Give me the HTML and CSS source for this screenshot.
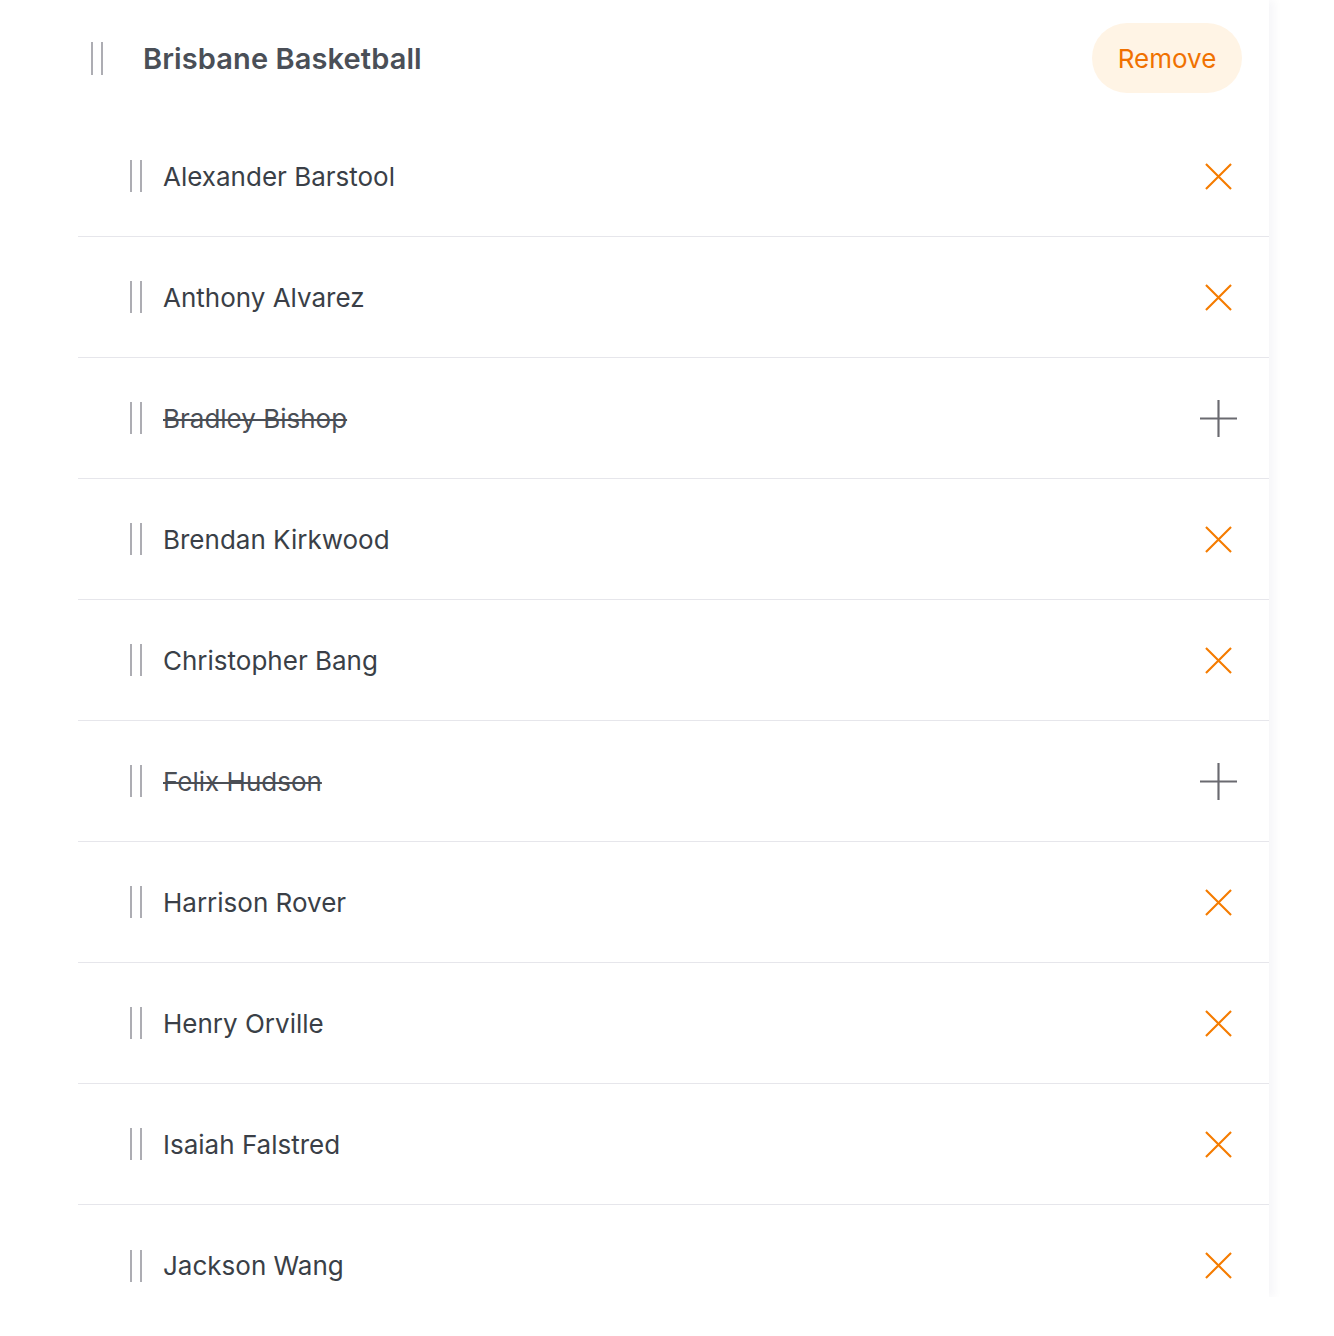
FILE: index.html
```html
<!DOCTYPE html>
<html>
<head>
<meta charset="utf-8">
<link rel="stylesheet" href="styles.css">
</head>
<body>
<div class="card">
  <div class="header">
    <span class="handle handle-lg"></span>
    <h1 class="title">Brisbane Basketball</h1>
    <button class="remove">Remove</button>
  </div>
  <ul class="list">
    <li class="row"><span class="handle"></span><span class="name">Alexander Barstool</span><span class="icon x"><svg viewBox="0 0 28 28"><path d="M1 1L27 27M27 1L1 27"/></svg></span></li>
    <li class="row"><span class="handle"></span><span class="name">Anthony Alvarez</span><span class="icon x"><svg viewBox="0 0 28 28"><path d="M1 1L27 27M27 1L1 27"/></svg></span></li>
    <li class="row"><span class="handle"></span><span class="name struck">Bradley Bishop</span><span class="icon plus"><svg viewBox="0 0 38 38"><path d="M19 0V38M0 19H38"/></svg></span></li>
    <li class="row"><span class="handle"></span><span class="name">Brendan Kirkwood</span><span class="icon x"><svg viewBox="0 0 28 28"><path d="M1 1L27 27M27 1L1 27"/></svg></span></li>
    <li class="row"><span class="handle"></span><span class="name">Christopher Bang</span><span class="icon x"><svg viewBox="0 0 28 28"><path d="M1 1L27 27M27 1L1 27"/></svg></span></li>
    <li class="row"><span class="handle"></span><span class="name struck">Felix Hudson</span><span class="icon plus"><svg viewBox="0 0 38 38"><path d="M19 0V38M0 19H38"/></svg></span></li>
    <li class="row"><span class="handle"></span><span class="name">Harrison Rover</span><span class="icon x"><svg viewBox="0 0 28 28"><path d="M1 1L27 27M27 1L1 27"/></svg></span></li>
    <li class="row"><span class="handle"></span><span class="name">Henry Orville</span><span class="icon x"><svg viewBox="0 0 28 28"><path d="M1 1L27 27M27 1L1 27"/></svg></span></li>
    <li class="row"><span class="handle"></span><span class="name">Isaiah Falstred</span><span class="icon x"><svg viewBox="0 0 28 28"><path d="M1 1L27 27M27 1L1 27"/></svg></span></li>
    <li class="row last"><span class="handle"></span><span class="name">Jackson Wang</span><span class="icon x"><svg viewBox="0 0 28 28"><path d="M1 1L27 27M27 1L1 27"/></svg></span></li>
  </ul>
</div>
</body>
</html>
```
FILE: styles.css
```css
* { box-sizing: border-box; }
html, body { margin: 0; padding: 0; background: #ffffff; }
body { font-family: Inter, "Noto Sans", sans-serif; color: #3b4048; }

.card {
  margin-left: 78px;
  width: 1191px;
  height: 1297px;
  overflow: hidden;
  background: #fff;
  box-shadow: 6px 0 8px rgba(40, 30, 80, 0.035);
}

.header {
  height: 116px;
  display: flex;
  align-items: center;
  padding-left: 13px;
  padding-right: 27px;
}
.title {
  margin: 0 0 0 40px;
  font-size: 29px;
  font-weight: 600;
  color: #4a4f57;
  flex: 1;
  letter-spacing: 0.1px;
}
.remove {
  font-family: inherit;
  border: none;
  background: #fff4e5;
  color: #f07100;
  font-size: 26px;
  height: 70px;
  width: 150px;
  border-radius: 35px;
  padding: 0;
}

.handle {
  display: inline-block;
  width: 12px;
  height: 32px;
  border-left: 2px solid #adadb3;
  border-right: 2px solid #adadb3;
  flex: none;
}
.handle-lg { height: 33px; }

.list { list-style: none; margin: 0; padding: 0; }
.row {
  height: 121px;
  display: flex;
  align-items: center;
  padding-left: 52px;
  padding-right: 32px;
  border-bottom: 1px solid #e6e6eb;
}
.row.last { border-bottom: none; }
.name {
  margin-left: 21px;
  font-size: 26px;
  color: #3a3f47;
  flex: 1;
}
.name.struck {
  text-decoration: line-through;
  text-decoration-thickness: 1.5px;
  color: #4a4e55;
}
.icon { display: flex; align-items: center; justify-content: center; width: 38px; height: 38px; }
.icon svg { display: block; }
.icon.x svg { width: 27px; height: 27px; }
.icon.x path { stroke: #f57c00; stroke-width: 2.2; fill: none; }
.icon.plus svg { width: 37px; height: 37px; }
.icon.plus path { stroke: #6a6a70; stroke-width: 2.2; fill: none; }
```
